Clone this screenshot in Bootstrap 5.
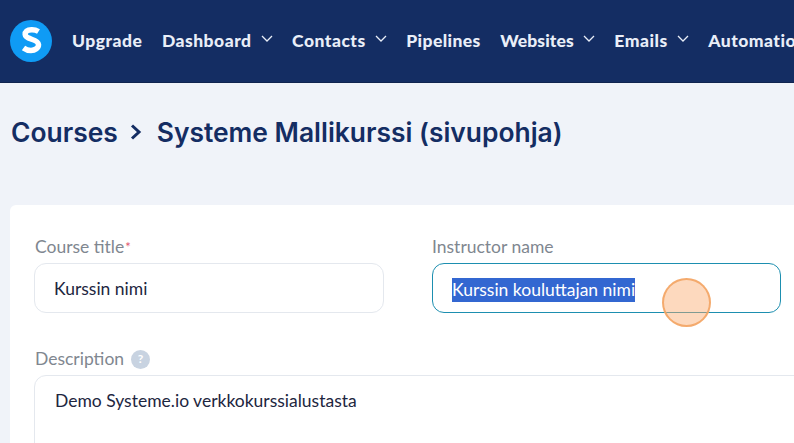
<!DOCTYPE html>
<html lang="en">
<head>
<meta charset="utf-8">
<title>Course</title>
<link href="https://cdn.jsdelivr.net/npm/bootstrap@5.3.0/dist/css/bootstrap.min.css" rel="stylesheet">
<style>
html,body{height:443px;overflow:hidden}
body{background:#f0f3f9;font-family:"Lato","Liberation Sans",sans-serif;color:#142d63;position:relative}
.topbar{height:83px;background:#142d63;padding:0 0 0 10px;flex-wrap:nowrap;overflow:hidden;border-bottom:1px solid #10244f}
.logo-dot{width:42px;height:42px;flex:none;margin-right:20px;display:block}
.menu-item{color:#e9eef8;font-weight:900;font-size:17.5px;letter-spacing:.5px;line-height:20px;white-space:nowrap;text-decoration:none;margin-right:19.5px;display:flex;align-items:center;margin-top:-1px}
.menu-item.tight-item{letter-spacing:.1px}
.menu-item.snug-item{letter-spacing:.4px}
.menu-item svg{width:12px;height:7px;margin-left:9px;margin-top:-4px;flex:none}
.crumbs{padding:34px 10px 0 11px;height:122px;font-family:"Inter","Liberation Sans",sans-serif;font-weight:600;font-size:26.4px;line-height:30px;color:#142d63;white-space:nowrap}
.crumbs svg{width:12px;height:16px;margin:7px 15px 0 12px;flex:none}
.panel{background:#fff;margin-left:10px;width:1000px;height:400px;border-radius:6px 0 0 0;padding:32px 24px;border:0}
.field-row{display:grid;grid-template-columns:350px 349px;column-gap:48px;margin-bottom:36px}
.field-label{color:#7f8790;font-size:17.5px;line-height:20px;margin-bottom:6px;display:flex;align-items:center}
.field-label.nudged{padding-left:1px}
.req{color:#e0566f;font-size:13px;align-self:flex-start;margin-left:1px}
.help-dot{width:19px;height:19px;border-radius:50%;background:#c8d3e1;color:#fff;font-size:12px;font-weight:700;display:inline-flex;align-items:center;justify-content:center;margin-left:7px}
.entry.form-control{font-family:inherit;font-size:17.5px;color:#1d2640;height:50px;line-height:22px;padding:14px 19px;border:1px solid #e4e8ee;border-radius:12px;background:#fff}
.entry.active-entry{border-color:#1d8fb0}
.entry.tall{height:140px;padding-left:20px;resize:none}
.picked{background:#3367d1;color:#fff;display:inline-block;line-height:24px}
.click-dot{position:absolute;left:662px;top:278px;width:49px;height:49px;border-radius:50%;background:rgba(250,170,110,.45);border:2px solid rgba(243,165,100,.9)}
</style>
</head>
<body>
<nav class="navbar topbar d-flex align-items-center justify-content-start">
  <svg class="logo-dot" viewBox="0 0 42 42" aria-hidden="true"><circle cx="21" cy="21" r="21" fill="#0f9bf5"/><path d="M28.500 11.500C26 10 24 9.600 21.500 9.700C17 9.800 15 12 15.200 14.500C15.500 20 28 18.500 28.500 24.500C28.700 28 25 30.500 21 30.500C18 30.500 15.500 29.500 13.500 28" fill="none" stroke="#fff" stroke-width="5.500"/></svg>
  <a class="menu-item" href="#">Upgrade</a>
  <a class="menu-item" href="#">Dashboard<svg viewBox="0 0 12 7"><path d="M1 1l5 5 5-5" fill="none" stroke="#e9eef8" stroke-width="1.300"/></svg></a>
  <a class="menu-item" href="#">Contacts<svg viewBox="0 0 12 7"><path d="M1 1l5 5 5-5" fill="none" stroke="#e9eef8" stroke-width="1.300"/></svg></a>
  <a class="menu-item snug-item" href="#">Pipelines</a>
  <a class="menu-item tight-item" href="#">Websites<svg viewBox="0 0 12 7"><path d="M1 1l5 5 5-5" fill="none" stroke="#e9eef8" stroke-width="1.300"/></svg></a>
  <a class="menu-item" href="#">Emails<svg viewBox="0 0 12 7"><path d="M1 1l5 5 5-5" fill="none" stroke="#e9eef8" stroke-width="1.300"/></svg></a>
  <a class="menu-item" href="#">Automations</a>
</nav>
<h1 class="crumbs m-0 d-flex align-items-start"><span>Courses</span><svg viewBox="0 0 12 16"><path d="M2 1.500L9 8l-7 6.500" fill="none" stroke="#142d63" stroke-width="3"/></svg><span>Systeme Mallikurssi (sivupohja)</span></h1>
<div class="panel">
  <div class="field-row">
    <div>
      <div class="field-label nudged">Course title<span class="req">*</span></div>
      <div class="form-control entry">Kurssin nimi</div>
    </div>
    <div>
      <div class="field-label">Instructor name</div>
      <div class="form-control entry active-entry"><span class="picked">Kurssin kouluttajan nimi</span></div>
    </div>
  </div>
  <div class="field-label nudged">Description<span class="help-dot">?</span></div>
  <div class="form-control entry tall">Demo Systeme.io verkkokurssialustasta</div>
</div>
<div class="click-dot"></div>
</body>
</html>
